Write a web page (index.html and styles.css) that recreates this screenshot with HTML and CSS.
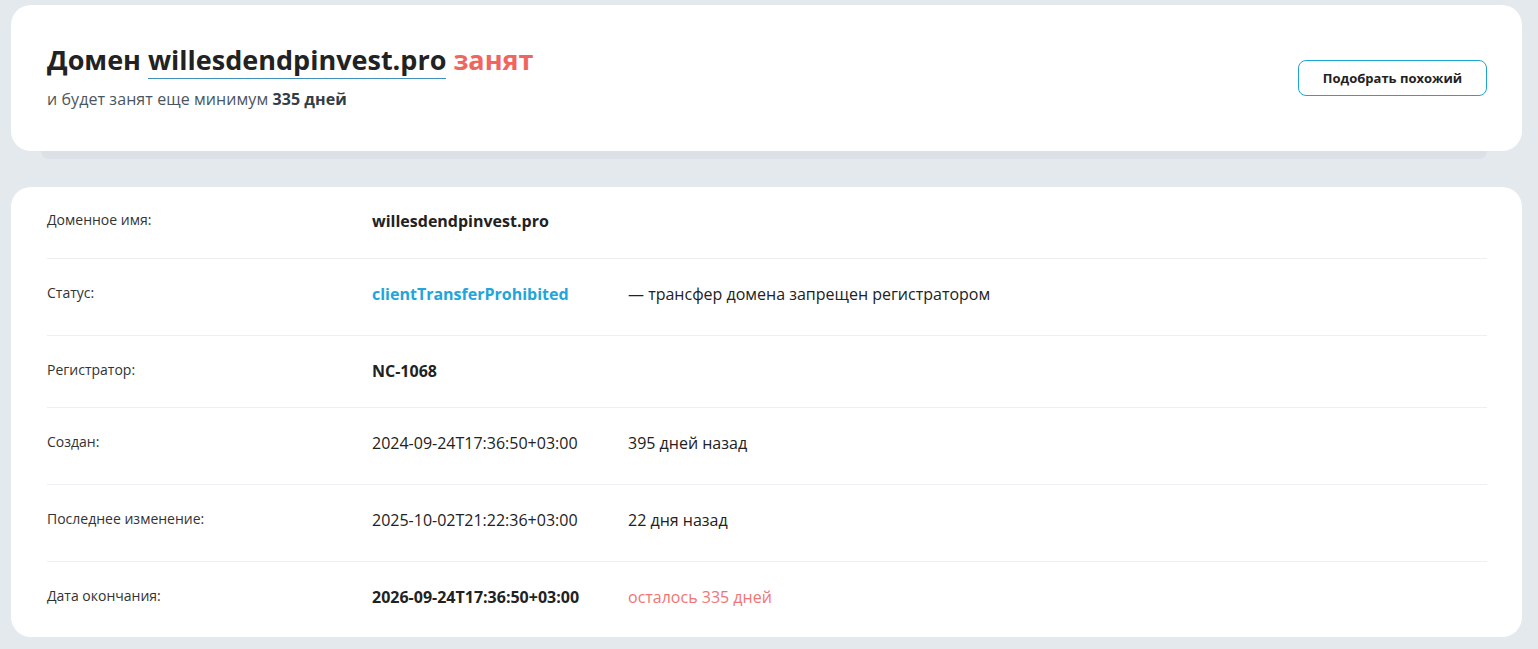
FILE: index.html
```html
<!DOCTYPE html>
<html lang="ru">
<head>
    <meta charset="UTF-8">
    <meta name="viewport" content="width=device-width, initial-scale=1.0">
    <title>Домен willesdendpinvest.pro занят</title>
    <link rel="stylesheet" href="styles.css">
</head>
<body>
    <div class="page">
        <section class="card summary">
            <div class="summary-text">
                <h1>Домен <span class="domain">willesdendpinvest.pro</span> <span class="busy">занят</span></h1>
                <p class="sub">и будет занят еще минимум <b>335 дней</b></p>
            </div>
            <button class="btn">Подобрать похожий</button>
        </section>
        <div class="card-tab"></div>

        <section class="card info">
            <div class="row">
                <div class="label">Доменное имя:</div>
                <div class="value bold">willesdendpinvest.pro</div>
            </div>
            <div class="row">
                <div class="label">Статус:</div>
                <div class="value bold link">clientTransferProhibited</div>
                <div class="note">— трансфер домена запрещен регистратором</div>
            </div>
            <div class="row short">
                <div class="label">Регистратор:</div>
                <div class="value bold">NC-1068</div>
            </div>
            <div class="row">
                <div class="label">Создан:</div>
                <div class="value">2024-09-24T17:36:50+03:00</div>
                <div class="note">395 дней назад</div>
            </div>
            <div class="row">
                <div class="label">Последнее изменение:</div>
                <div class="value">2025-10-02T21:22:36+03:00</div>
                <div class="note">22 дня назад</div>
            </div>
            <div class="row">
                <div class="label">Дата окончания:</div>
                <div class="value bold">2026-09-24T17:36:50+03:00</div>
                <div class="note red">осталось 335 дней</div>
            </div>
        </section>
    </div>
</body>
</html>
```

FILE: styles.css
```css
body {
    margin: 0;
    background: #e4e9ee;
    font-family: "Open Sans", "Noto Sans", sans-serif;
    color: #222;
}

.page {
    padding: 5px 16px 12px 11px;
}

.card {
    background: #fff;
    border-radius: 20px;
}

.summary {
    display: flex;
    align-items: center;
    justify-content: space-between;
    height: 146px;
    box-sizing: border-box;
    padding: 0 35px 0 36px;
    position: relative;
    z-index: 1;
}

.summary-text {
    align-self: flex-start;
    padding-top: 37px;
}

.card-tab {
    height: 8px;
    margin: 0 35px 28px 30px;
    background: #dbe1e7;
    border-radius: 0 0 10px 10px;
}

h1 {
    margin: 0;
    font-size: 27px;
    line-height: 36px;
    font-weight: 700;
    color: #222;
}

.domain {
    border-bottom: 1px solid #3f8fb8;
}

.busy {
    color: #f0655f;
}

.sub {
    margin: 10px 0 0;
    font-size: 16px;
    line-height: 22px;
    letter-spacing: 0.08px;
    color: #4b5560;
}

.sub b {
    color: #333d47;
}

.btn {
    width: 189px;
    height: 36px;
    margin-top: -1px;
    background: #fff;
    border: 1px solid #1ea5d8;
    border-radius: 8px;
    font-family: inherit;
    font-size: 13px;
    font-weight: 700;
    color: #222;
    cursor: pointer;
}

.info {
    padding: 0 35px 0 36px;
}

.row {
    display: flex;
    align-items: flex-start;
    box-sizing: border-box;
    height: 77px;
    padding-top: 24px;
    border-top: 1px solid #edf0f3;
    line-height: 22px;
}

.row:first-child {
    border-top: 0;
    height: 71px;
    padding-top: 23px;
}

.row.short {
    height: 72px;
}

.row:last-child {
    height: 76px;
}

.label {
    width: 325px;
    font-size: 14px;
    color: #333;
    margin-top: -1px;
}

.value {
    width: 256px;
    font-size: 16px;
}

.note {
    font-size: 16px;
}

.bold {
    font-weight: 700;
}

.link {
    color: #22a5da;
}

.red {
    color: #f07575;
}
```
